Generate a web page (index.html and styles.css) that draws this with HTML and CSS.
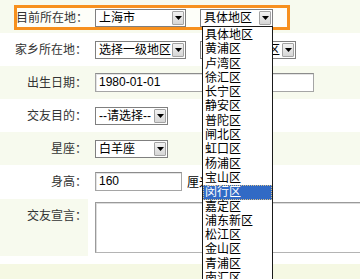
FILE: index.html
```html
<!DOCTYPE html>
<html lang="zh-CN">
<head>
<meta charset="utf-8">
<title>个人资料</title>
<link rel="stylesheet" href="styles.css">
</head>
<body>
<div class="form">
  <div class="row alt first">
    <div class="hl">
      <div class="label hl-label">目前所在地：</div>
      <div class="field">
        <div class="select w90"><span class="txt">上海市</span><span class="btn"><svg width="7" height="4" viewBox="0 0 7 4"><path d="M0 0H7L3.5 4Z" fill="#000"/></svg></span></div>
        <div class="select w73 gap15"><span class="txt">具体地区</span><span class="btn"><svg width="7" height="4" viewBox="0 0 7 4"><path d="M0 0H7L3.5 4Z" fill="#000"/></svg></span></div>
      </div>
    </div>
  </div>
  <div class="row">
    <div class="label">家乡所在地：</div>
    <div class="field">
      <div class="select w90"><span class="txt">选择一级地区</span><span class="btn"><svg width="7" height="4" viewBox="0 0 7 4"><path d="M0 0H7L3.5 4Z" fill="#000"/></svg></span></div>
      <div class="select w96 gap15"><span class="txt hidden-txt">区</span><span class="btn"><svg width="7" height="4" viewBox="0 0 7 4"><path d="M0 0H7L3.5 4Z" fill="#000"/></svg></span></div>
    </div>
  </div>
  <div class="row alt">
    <div class="label">出生日期：</div>
    <div class="field"><div class="input w219">1980-01-01</div></div>
  </div>
  <div class="row">
    <div class="label">交友目的：</div>
    <div class="field">
      <div class="select w73"><span class="txt">--请选择--</span><span class="btn"><svg width="7" height="4" viewBox="0 0 7 4"><path d="M0 0H7L3.5 4Z" fill="#000"/></svg></span></div>
    </div>
  </div>
  <div class="row alt">
    <div class="label">星座：</div>
    <div class="field">
      <div class="select w73"><span class="txt">白羊座</span><span class="btn"><svg width="7" height="4" viewBox="0 0 7 4"><path d="M0 0H7L3.5 4Z" fill="#000"/></svg></span></div>
    </div>
  </div>
  <div class="row">
    <div class="label">身高：</div>
    <div class="field"><div class="input w87">160</div><span class="unit">厘米</span></div>
  </div>
  <div class="row tall">
    <div class="label top alt-cell">交友宣言：</div>
    <div class="field top"><div class="textarea"></div></div>
  </div>
  <div class="spacer"></div>
  <div class="bottom"></div>

  <ul class="droplist">
    <li>具体地区</li>
    <li>黄浦区</li>
    <li>卢湾区</li>
    <li>徐汇区</li>
    <li>长宁区</li>
    <li>静安区</li>
    <li>普陀区</li>
    <li>闸北区</li>
    <li>虹口区</li>
    <li>杨浦区</li>
    <li>宝山区</li>
    <li class="sel">闵行区</li>
    <li>嘉定区</li>
    <li>浦东新区</li>
    <li>松江区</li>
    <li>金山区</li>
    <li>青浦区</li>
    <li>南汇区</li>
  </ul>
</div>
</body>
</html>
```

FILE: styles.css
```css
html, body {
  margin: 0;
  padding: 0;
  background: #ffffff;
}
body {
  font-family: "Liberation Sans", "Noto Sans CJK SC", sans-serif;
  font-size: 12px;
  color: #000;
  overflow: hidden;
}
.form {
  position: relative;
  width: 360px;
  height: 279px;
  overflow: hidden;
}
.row {
  display: flex;
  align-items: center;
  height: 33px;
}
.alt {
  background: #f7faee;
}
.row.first {
  align-items: flex-start;
  height: 28px;
  padding-top: 5px;
}
.hl {
  display: flex;
  align-items: center;
  margin-left: 14px;
  width: 270px;
  height: 19px;
  border: 3px solid #f7901e;
  background: #fdfef9;
}
.label {
  flex: none;
  width: 87px;
  text-align: right;
  color: #333;
  white-space: nowrap;
  line-height: 14px;
}
.hl-label {
  width: 72px;
  margin-left: -1px;
}
.field {
  display: flex;
  align-items: center;
  padding-left: 8px;
}
.hl .field {
  padding-left: 7px;
}
.select {
  box-sizing: border-box;
  display: flex;
  align-items: center;
  justify-content: space-between;
  height: 18px;
  border: 1px solid #7f7f7f;
  background: #fff;
  padding: 0 1px 0 3px;
  white-space: nowrap;
  overflow: hidden;
}
.select .txt {
  line-height: 14px;
  overflow: hidden;
}
.select .hidden-txt {
  margin-left: 64px;
}
.w90 { width: 91px; }
.w73 { width: 73px; }
.w96 { width: 96px; }
.gap15 { margin-left: 14px; }
.btn {
  flex: none;
  box-sizing: border-box;
  width: 12px;
  height: 14px;
  display: flex;
  align-items: center;
  justify-content: center;
  border: 1px solid #a3a3a3;
  border-radius: 1px;
  background: linear-gradient(#f2f2f2, #d6d6d6);
}
.btn svg {
  display: block;
}
.input {
  box-sizing: border-box;
  height: 19px;
  border: 1px solid #a5a5a5;
  border-top-color: #8c8c8c;
  box-shadow: inset 1px 1px 0 #e4e4e4;
  background: #fff;
  padding: 0 3px;
  line-height: 17px;
}
.w219 { width: 219px; }
.w87 { width: 87px; }
.unit {
  margin-left: 5px;
  color: #000;
}
.row.tall {
  height: 59px;
  align-items: stretch;
}
.label.top {
  padding-top: 10px;
  box-sizing: border-box;
}
.alt-cell {
  background: #f7faee;
  width: 88px;
  padding-right: 1px;
  box-sizing: border-box;
  margin-top: 1px;
  margin-bottom: 1px;
}
.field.top {
  align-items: flex-start;
  padding-top: 4px;
  padding-left: 7px;
}
.textarea {
  box-sizing: border-box;
  width: 290px;
  height: 51px;
  border: 1px solid #b4b4b4;
  border-top-color: #9a9a9a;
  border-left-color: #9a9a9a;
  box-shadow: inset 1px 1px 0 #dcdcdc;
  background: #fff;
}
.spacer {
  height: 7px;
}
.bottom {
  height: 40px;
  background: #f5f8e3;
}
.droplist {
  position: absolute;
  left: 202px;
  top: 26px;
  width: 71px;
  height: 260px;
  margin: 0;
  padding: 1px 0 0;
  list-style: none;
  box-sizing: border-box;
  border: 1px solid #1a1a1a;
  border-bottom: none;
  background: #fff;
}
.droplist li {
  box-sizing: border-box;
  height: 14.3px;
  line-height: 14px;
  padding-left: 2px;
  white-space: nowrap;
  color: #000;
}
.droplist li.sel {
  background: #316ac5;
  color: #fff;
  outline: 1px dotted #d9c08a;
  outline-offset: -1px;
}
```
